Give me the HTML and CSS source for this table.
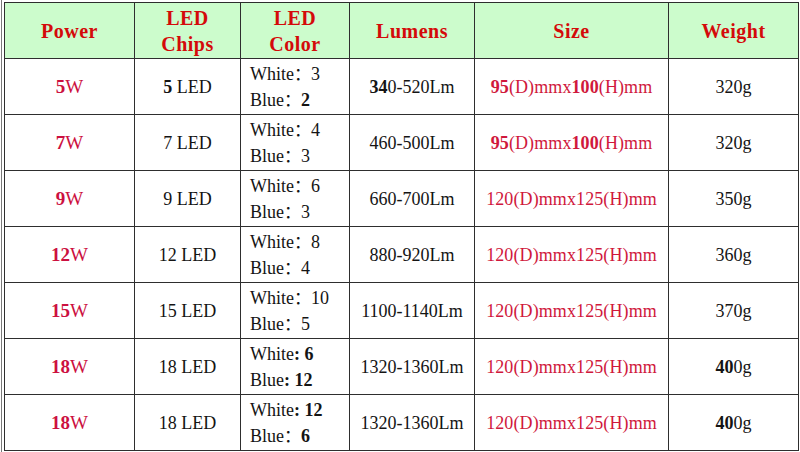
FILE: index.html
```html
<!DOCTYPE html>
<html lang="en">
<head>
<meta charset="utf-8">
<title>LED Specifications</title>
<link rel="stylesheet" href="styles.css">
</head>
<body>
<div class="frame">
<table class="spec">
  <colgroup>
    <col class="c-power">
    <col class="c-chips">
    <col class="c-color">
    <col class="c-lumens">
    <col class="c-size">
    <col class="c-weight">
  </colgroup>
  <thead>
    <tr>
      <th>Power</th>
      <th>LED<br>Chips</th>
      <th>LED<br>Color</th>
      <th>Lumens</th>
      <th>Size</th>
      <th>Weight</th>
    </tr>
  </thead>
  <tbody>
    <tr>
      <td class="power"><b>5</b>W</td>
      <td><b>5</b> LED</td>
      <td class="color">White<span class="cj">：</span>3<br>Blue<span class="cj">：</span><b>2</b></td>
      <td><b>34</b>0-520Lm</td>
      <td class="size"><b>95</b>(D)mmx<b>100</b>(H)mm</td>
      <td>320g</td>
    </tr>
    <tr>
      <td class="power"><b>7</b>W</td>
      <td>7 LED</td>
      <td class="color">White<span class="cj">：</span>4<br>Blue<span class="cj">：</span>3</td>
      <td>460-500Lm</td>
      <td class="size"><b>95</b>(D)mmx<b>100</b>(H)mm</td>
      <td>320g</td>
    </tr>
    <tr>
      <td class="power"><b>9</b>W</td>
      <td>9 LED</td>
      <td class="color">White<span class="cj">：</span>6<br>Blue<span class="cj">：</span>3</td>
      <td>660-700Lm</td>
      <td class="size">120(D)mmx125(H)mm</td>
      <td>350g</td>
    </tr>
    <tr>
      <td class="power"><b>12</b>W</td>
      <td>12 LED</td>
      <td class="color">White<span class="cj">：</span>8<br>Blue<span class="cj">：</span>4</td>
      <td>880-920Lm</td>
      <td class="size">120(D)mmx125(H)mm</td>
      <td>360g</td>
    </tr>
    <tr>
      <td class="power"><b>15</b>W</td>
      <td>15 LED</td>
      <td class="color">White<span class="cj">：</span>10<br>Blue<span class="cj">：</span>5</td>
      <td>1100-1140Lm</td>
      <td class="size">120(D)mmx125(H)mm</td>
      <td>370g</td>
    </tr>
    <tr>
      <td class="power"><b>18</b>W</td>
      <td>18 LED</td>
      <td class="color">White<b>:</b> <b>6</b><br>Blue<b>:</b> <b>12</b></td>
      <td>1320-1360Lm</td>
      <td class="size">120(D)mmx125(H)mm</td>
      <td><b>40</b>0g</td>
    </tr>
    <tr>
      <td class="power"><b>18</b>W</td>
      <td>18 LED</td>
      <td class="color">White<b>:</b> <b>12</b><br>Blue<span class="cj">：</span><b>6</b></td>
      <td>1320-1360Lm</td>
      <td class="size">120(D)mmx125(H)mm</td>
      <td><b>40</b>0g</td>
    </tr>
  </tbody>
</table>
</div>
</body>
</html>
```

FILE: styles.css
```css
html, body {
  margin: 0;
  padding: 0;
  background: #ffffff;
}

body {
  font-family: "Liberation Serif", "Times New Roman", serif;
  color: #141414;
}

.frame {
  margin-left: 1px;
  border-left: 1px solid #7a7a7a;
  padding: 2px 0 0 2px;
  height: 452px;
  box-sizing: border-box;
}

.spec {
  border-collapse: collapse;
  table-layout: fixed;
  width: 794px;
}

.c-power { width: 130px; }
.c-chips { width: 106px; }
.c-color { width: 109px; }
.c-lumens { width: 125px; }
.c-size { width: 194px; }
.c-weight { width: 130px; }

.spec th,
.spec td {
  border: 1px solid #2e2e2e;
  height: 55px;
  padding: 0;
  text-align: center;
  vertical-align: middle;
  font-size: 18px;
  line-height: 26px;
  white-space: nowrap;
}

.spec th {
  background: #ccfccc;
  color: #d40a0a;
  font-weight: bold;
  font-size: 20px;
  letter-spacing: 0.5px;
}

.spec td.power {
  color: #cc1040;
  font-size: 19px;
}

.spec td.size {
  color: #d0183c;
  letter-spacing: 0.1px;
}

.spec td.color {
  text-align: left;
  padding-left: 9px;
}

.cj {
  font-family: "Noto Sans CJK SC", sans-serif;
  font-size: 17px;
  line-height: 0;
}
```
